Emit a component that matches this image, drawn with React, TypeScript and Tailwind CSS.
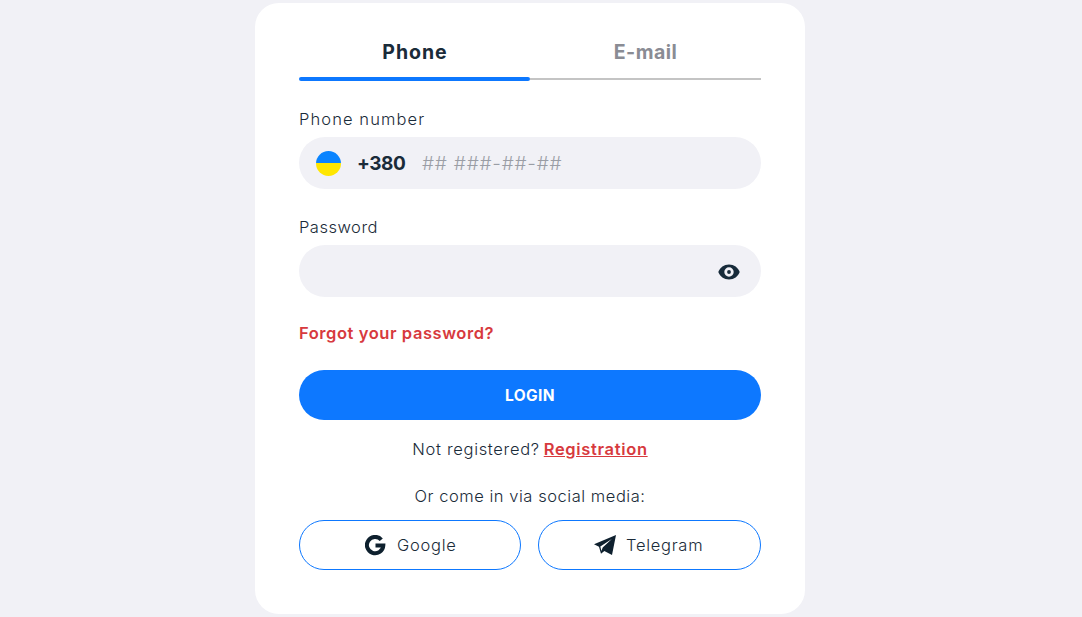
import { useState } from 'react';

type TabId = 'phone' | 'email';

interface TabOption {
  id: TabId;
  label: string;
  textClass: string;
}

const tabs: TabOption[] = [
  { id: 'phone', label: 'Phone', textClass: 'tracking-[1px] pl-px' },
  { id: 'email', label: 'E-mail', textClass: 'tracking-[0.5px]' },
];

function EyeIcon() {
  return (
    <svg width="22" height="16" viewBox="0 0 22 16" fill="none">
      <path
        d="M11 .5C6 .5 1.9 3.6.3 8c1.6 4.4 5.7 7.500 10.700 7.500S20.100 12.400 21.700 8C20.100 3.600 16 .5 11 .5Z"
        fill="#172b3a"
      />
      <circle cx="11" cy="8" r="3.300" fill="#172b3a" stroke="#f1f1f6" strokeWidth="2.800" />
    </svg>
  );
}

function GoogleIcon() {
  return (
    <svg width="21" height="21" viewBox="0 0 21 21" fill="none" stroke="#0e202e" strokeWidth="4">
      <path d="M16.300 4.700A8.200 8.200 0 1 0 18.300 10.600H10.500" />
    </svg>
  );
}

function PlaneIcon() {
  return (
    <svg width="22" height="20" viewBox="0 0 22 20">
      <path d="M22 0 0 9.300l5 2.500 2 7L10.300 16 18 20Z" fill="#0e202e" />
      <path d="M17.800 4 6.300 11.500l1.100 4.500 1.300-3.500Z" fill="#fff" />
    </svg>
  );
}

function FlagIcon() {
  return (
    <div className="flex h-[25px] w-[25px] flex-col overflow-hidden rounded-full">
      <div className="h-1/2 bg-[#0a84ff]" />
      <div className="h-1/2 bg-[#ffe600]" />
    </div>
  );
}

export default function App() {
  const [activeTab, setActiveTab] = useState<TabId>('phone');

  return (
    <div className="flex h-[617px] justify-center overflow-hidden bg-[#f1f1f6] pr-[22px] pt-[3px] font-['Inter',sans-serif] text-[#1a2b39]">
      <div className="h-[611px] w-[550px] rounded-[24px] bg-white px-11 pt-[33px]">
        {/* Tabs */}
        <div className="grid grid-cols-2">
          {tabs.map((tab) => (
            <button
              key={tab.id}
              onClick={() => setActiveTab(tab.id)}
              className={`flex h-[45px] flex-col items-center text-[19.5px] font-bold leading-8 ${
                activeTab === tab.id ? '' : 'text-[#8a8c94]'
              }`}
            >
              <span className={tab.textClass}>{tab.label}</span>
              <span
                className={
                  activeTab === tab.id
                    ? 'mt-[9px] h-1 w-full rounded-full bg-[#0d78ff]'
                    : 'mt-2.5 h-0.5 w-full bg-[#c4c4c4]'
                }
              />
            </button>
          ))}
        </div>

        {/* Phone number */}
        <div className="mt-[26px] h-[30px] text-[16.5px] font-light leading-6 tracking-[1.1px]">Phone number</div>
        <div className="flex h-[52px] items-center rounded-full bg-[#f1f1f6] pl-[17px] text-[19px]">
          <FlagIcon />
          <span className="ml-4 w-[65px] pt-0.5 font-bold tracking-[-0.5px]">+380</span>
          <span className="pt-0.5 font-light tracking-[0.8px] text-[#9a9da5]">## ###-##-##</span>
        </div>

        {/* Password */}
        <div className="mt-[26px] h-[30px] text-[16.5px] font-light leading-6 tracking-[0.5px]">Password</div>
        <div className="flex h-[52px] items-center justify-end rounded-full bg-[#f1f1f6] pr-[21px] pt-px">
          <EyeIcon />
        </div>

        <a href="#" className="mt-6 block text-[16.5px] font-semibold leading-6 tracking-[0.57px] text-[#d73a3e]">
          Forgot your password?
        </a>

        <button className="mt-[25px] flex h-[50px] w-full items-center justify-center rounded-full bg-[#0d78ff] pt-0.5 text-[15.5px] font-bold tracking-[0.4px] text-white">
          LOGIN
        </button>

        <div className="mt-[17px] flex justify-center gap-1 text-[16.5px] leading-6">
          <span className="font-light tracking-[0.68px]">Not registered?</span>
          <a href="#" className="font-semibold tracking-[0.66px] text-[#d73a3e] underline">
            Registration
          </a>
        </div>

        <div className="mt-[23px] text-center text-[16.5px] font-light leading-6 tracking-[0.54px]">
          Or come in via social media:
        </div>

        {/* Social buttons */}
        <div className="mt-3 flex justify-between text-[16.5px] font-light tracking-[0.72px]">
          <button className="flex h-[50px] w-[222px] items-center rounded-full border border-[#0d78ff] pl-[65px]">
            <GoogleIcon />
            <span className="ml-[11px]">Google</span>
          </button>
          <button className="flex h-[50px] w-[223px] items-center rounded-full border border-[#0d78ff] pl-[55px]">
            <PlaneIcon />
            <span className="ml-[10px]">Telegram</span>
          </button>
        </div>
      </div>
    </div>
  );
}
